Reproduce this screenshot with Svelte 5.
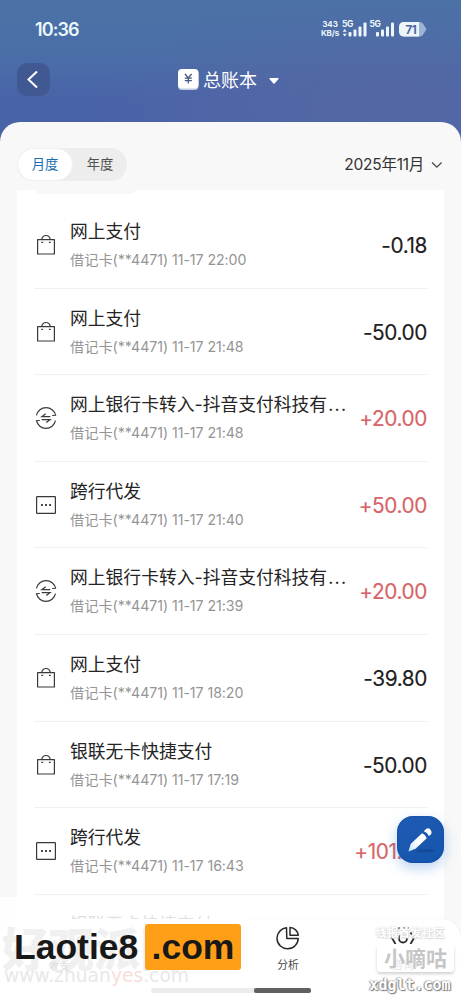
<script>
  const rows = [
    { icon: 'bag', title: '网上支付', time: '22:00', amount: '-0.18' },
    { icon: 'bag', title: '网上支付', time: '21:48', amount: '-50.00' },
    { icon: 'transfer', title: '网上银行卡转入-抖音支付科技有', cut: true, time: '21:48', amount: '+20.00' },
    { icon: 'more', title: '跨行代发', time: '21:40', amount: '+50.00' },
    { icon: 'transfer', title: '网上银行卡转入-抖音支付科技有', cut: true, time: '21:39', amount: '+20.00' },
    { icon: 'bag', title: '网上支付', time: '18:20', amount: '-39.80' },
    { icon: 'bag', title: '银联无卡快捷支付', time: '17:19', amount: '-50.00' },
    { icon: 'more', title: '跨行代发', time: '16:43', amount: '+101.00' },
    { icon: 'none', title: '银联无卡快捷支付', time: '', amount: '' }
  ];
</script>

<div class="screen">
  <header>
    <div class="status">
      <span class="clock">10:36</span>
      <div class="signals">
        <div class="speed"><span>343</span><span>KB/s</span></div>
        <svg class="bars" width="55" height="20" viewBox="0 0 55 20" fill="#eef6fc">
          <text x="0" y="8">5G</text>
          <text x="27.500" y="8">5G</text>
          <path d="M2.700 10l2 2.700H.7zM2.700 17.500l2-2.700H.7z" />
          <rect x="6.500" y="13" width="3" height="4.500" rx="1" /><rect x="11.500" y="10.500" width="3" height="7" rx="1" /><rect x="16.500" y="7.500" width="3" height="10" rx="1" /><rect x="21.500" y="3.500" width="3" height="14" rx="1" />
          <rect x="34" y="13" width="3" height="4.500" rx="1" /><rect x="39" y="10.500" width="3" height="7" rx="1" /><rect x="44" y="7.500" width="3" height="10" rx="1" /><rect x="49" y="3.500" width="3" height="14" rx="1" />
        </svg>
        <svg class="battery" width="28" height="15" viewBox="0 0 28 15">
          <path d="M4 0h17a4 4 0 0 1 3.500 2.500L27.500 7.300 24.500 12A4 4 0 0 1 21 14.500H4z" fill="#9eb4d4" />
          <path d="M4.500 0H20v14.500H4.500A4.500 4.500 0 0 1 0 10V4.500A4.500 4.500 0 0 1 4.500 0z" fill="#edf5fa" />
          <text x="6.500" y="11.500">71</text>
        </svg>
      </div>
    </div>
    <div class="topbar">
      <button class="back" aria-label="返回">
        <svg width="33" height="33" viewBox="0 0 33 33"><path d="M20 8.500 11.500 16.500 20 24.500" fill="none" stroke="#fff" stroke-width="2" /></svg>
      </button>
      <div class="book">
        <svg width="21" height="21" viewBox="0 0 21 21">
          <rect x="0" y="1" width="20.500" height="20" rx="4" fill="#bccbe5" /><rect width="20.500" height="19.500" rx="4" fill="#fff" />
          <path d="M7 5l3.300 4L13.600 5M10.300 9v5.500M6.800 9.200h7M6.800 11.600h7" fill="none" stroke="#455982" stroke-width="1.300" />
        </svg>
        <span>总账本</span>
        <svg class="caret" width="10" height="6" viewBox="0 0 10 6"><path d="M1 0h8q1 .3.500 1L5.600 5.500q-.6.500-1.200 0L.5 1Q0 .3 1 0z" fill="#fff" /></svg>
      </div>
    </div>
  </header>

  <main>
    <div class="filters">
      <div class="tabs"><span class="active">月度</span><span>年度</span></div>
      <div class="month"><span>2025年11月</span><svg width="12" height="8" viewBox="0 0 12 8"><path d="M1 1.500 5.800 6.200 10.600 1.500" fill="none" stroke="#444" stroke-width="1.200" /></svg></div>
    </div>
    <div class="list">
      <div class="ghost"></div>
      {#each rows as row}
        <div class="row">
          <svg class="icon" width="22" height="22" viewBox="0 0 22 22" fill="none" stroke="#393939" stroke-width="1.200">
            {#if row.icon === 'bag'}
              <path d="M2.600 5.600h16.800v14.400H2.600zM6.700 5.600c.4-2.700 1.700-4.100 4.300-4.100S14.900 2.900 15.300 5.600M6.300 8.400h1.800M13.900 8.400h1.800" stroke-linejoin="round" />
            {:else if row.icon === 'transfer'}
              <path d="M1.500 8.300A9.800 9.800 0 0 1 20.600 8.300L17.200 8.500M20.500 13.700A9.800 9.800 0 0 1 1.400 13.700L4.800 13.500" />
              <path d="M15.300 9.700H6.900L10.700 6.800M6.700 12.600h8.400L11.300 15.500" />
            {:else if row.icon === 'more'}
              <rect x="1.600" y="2.600" width="18.800" height="16.800" rx=".5" />
              <path d="M6 11h1.800M10.100 11h1.800M14.200 11H16" stroke-width="1.800" />
            {/if}
          </svg>
          <div class="detail">
            <div class="title">{row.title}{#if row.cut}<span class="dots">...</span>{/if}</div>
            {#if row.time}<div class="sub">借记卡<span>(**4471) 11-17 {row.time}</span></div>{/if}
          </div>
          <div class="amount" class:income={row.amount.startsWith('+')}>{row.amount}</div>
        </div>
      {/each}
    </div>
  </main>

  <footer>
    <nav>
      <div class="item"></div>
      <div class="item"></div>
      <div class="item">
        <svg width="24" height="24" viewBox="0 0 24 24" fill="none" stroke="#292929" stroke-width="1.500"><path d="M10.500 1.700A10.600 10.600 0 1 0 22.200 12.500H10.800zM14 1.500V9.300h8.300A8.700 8.700 0 0 0 14 1.500z" stroke-linejoin="round" /></svg>
        <span>分析</span>
      </div>
      <div class="item">
        <svg width="26" height="24" viewBox="0 0 26 24" fill="none" stroke="#292929" stroke-width="1.800"><path d="M5.500 6.500 2 12l3.500 6M20.500 6.500 24 12l-3.500 6M7 2.500h3M12 2.500h3M17 2.500h2" /><circle cx="13" cy="12.500" r="4" /></svg>
        <span>咨询</span>
      </div>
    </nav>
  </footer>

  <button class="edit" aria-label="编辑">
    <svg width="48" height="48" viewBox="0 0 48 48">
      <defs><linearGradient id="pen" x1="0" y1="1" x2="1" y2="0"><stop offset="0" stop-color="#c5e4ff" /><stop offset=".4" stop-color="#fff" /></linearGradient></defs>
      <path d="M18 36.500 23 33h12q4 2 0 3z" fill="#124187" opacity=".55" />
      <path d="M11.500 35.500 13.700 28 25 17.200q3 .9 4.800 5L18.500 32.700zM26.800 15.200 29 13q2.500-1.700 4.500.8t.7 4.500l-2.300 1.800q-1.500-3.700-5.100-4.900z" fill="url(#pen)" />
    </svg>
  </button>

  <div class="mark-left">
    <div class="faint-name">好观派网</div>
    <div class="faint-url">www.zhuan<span>yes</span>.com</div>
    <div class="faint-tab">收支</div>
    <div class="brand"><span>Laotie8</span><b>.com</b></div>
  </div>
  <div class="scrollbar"><i></i></div>
  <div class="mark-right">
    <div class="community">线报首发社区</div>
    <div class="name">小嘀咕</div>
    <div class="site">xdglt.com</div>
  </div>
</div>

<style>
  :global(body) { margin: 0; }
  .screen { position: relative; width: 461px; height: 1000px; overflow: hidden; display: flex; flex-direction: column; font-family: "Noto Sans CJK SC", sans-serif; color: #222;
    background: radial-gradient(ellipse 300px 110px at 390px 105px, #5568a5 0%, #5568a500 100%), linear-gradient(180deg, #4b72a6 0, #4a6ea8 55px, #4963a7 100px, #4963a7 140px); }
  button { border: 0; padding: 0; }
  svg { display: block; flex: none; }
  header { height: 122px; flex: none; box-sizing: border-box; padding-top: 17px; }
  .status { height: 26px; display: flex; align-items: center; justify-content: space-between; padding: 0 34px 0 35px; }
  .clock { font: 600 18px/26px "Inter", sans-serif; letter-spacing: -.9px; color: #eaf7fb; }
  .signals { display: flex; align-items: center; margin-top: -2px; }
  .speed { display: flex; flex-direction: column; align-items: center; width: 20px; margin-right: 2px; font: 700 8px/9.500px "Inter", sans-serif; color: #eef6fc; letter-spacing: -.1px; }
  .bars { margin-right: 2px; }
  .bars text { font: 700 8.500px "Inter", sans-serif; letter-spacing: -.4px; }
  .battery text { font: 700 11.500px "Inter", sans-serif; fill: #4969a0; letter-spacing: -.5px; }
  .topbar { display: grid; grid-template-columns: 33px 1fr 33px; padding: 0 17px; margin-top: 20px; align-items: center; }
  .back { width: 33px; height: 33px; border-radius: 10px; background: #405993; }
  .book { display: flex; align-items: center; justify-content: center; color: #fff; font-size: 18px; line-height: 26px; margin-left: -4px; }
  .book span { margin-left: 4px; margin-top: -2px; }
  .caret { margin-left: 12px; margin-top: 2px; }
  main { flex: 1; min-height: 0; background: #f8f8f8; border-radius: 20px 20px 0 0; display: flex; flex-direction: column; }
  .filters { flex: none; height: 68px; box-sizing: border-box; padding: 26px 18px 0 17px; display: flex; justify-content: space-between; align-items: flex-start; }
  .tabs { display: flex; width: 110px; height: 33px; border-radius: 17px; background: #ededed; font-size: 13.300px; line-height: 31px; text-align: center; color: #505050; }
  .tabs span { flex: 1; }
  .tabs .active { background: #fff; border-radius: 17px; color: #176fad; border: 1px solid #f0f0f0; box-sizing: border-box; line-height: 29px; }
  .month { display: flex; align-items: center; gap: 7px; height: 33px; font-size: 15.500px; color: #333; font-family: "Inter", "Noto Sans CJK SC", sans-serif; letter-spacing: -.25px; }
  .month span { margin-top: -3px; }
  .list { flex: 1; min-height: 0; overflow: hidden; margin: 0 17px; background: #fff; padding: 0 17px; }
  .ghost { width: 100px; height: 4px; margin-left: 1px; border-radius: 0 0 12px 12px; background: #f8f8f8; margin-bottom: 8px; }
  .row { height: 86.600px; box-sizing: border-box; border-bottom: 1px solid #f0f0f0; display: flex; align-items: flex-start; }
  .icon { margin: 32px 13px 0 1px; }
  .detail { flex: 1; min-width: 0; padding-top: 17px; }
  .title { font-family: "Inter", "Noto Sans CJK SC", sans-serif; font-size: 17.800px; line-height: 26px; height: 26px; white-space: nowrap; color: #242424; }
  .dots { letter-spacing: 1.300px; margin-left: 1px; }
  .sub { font-size: 14.200px; line-height: 22px; margin-top: 3px; color: #959595; white-space: nowrap; }
  .sub span { font-family: "Inter", sans-serif; letter-spacing: -.07px; }
  .amount { font: 400 20.800px/28px "Inter", sans-serif; letter-spacing: -.4px; padding-top: 30px; color: #202020; white-space: nowrap; -webkit-text-stroke: .15px; }
  .amount.income { color: #d76468; }
  footer { flex: none; height: 81px; background: #f9f9f9; }
  nav { height: 81px; background: #fff; border-radius: 20px 20px 0 0; box-shadow: 0 0 3px #0000000d; display: grid; grid-template-columns: repeat(4, 1fr); }
  .item { display: flex; flex-direction: column; align-items: center; padding-top: 7px; font-size: 10.800px; line-height: 16px; color: #484848; gap: 6px; }
  .edit { position: absolute; z-index: 3; left: 397px; top: 816px; width: 47px; height: 47px; border-radius: 16px; background: linear-gradient(150deg, #205bb4, #1555ac); box-shadow: 0 5px 13px #317bd555, inset 0 0 2px #0b4592; }
  .mark-left { position: absolute; z-index: 2; left: 0; top: 897px; width: 249px; height: 91px; background: #ffffffdd; }
  .faint-name { position: absolute; left: 2px; top: 16px; color: #f0f0f0; font-weight: 900; font-size: 46px; line-height: 66px; white-space: nowrap; }
  .faint-url { position: absolute; left: 4px; top: 69px; color: #e8e8e8; font: 18.700px/20px "DejaVu Sans", sans-serif; white-space: nowrap; }
  .faint-url span { color: #f8ded9; }
  .faint-tab { position: absolute; left: 49px; top: 62px; font-size: 10px; line-height: 14px; color: #ddd; }
  .brand { position: absolute; left: 14px; top: 27px; display: flex; font: 700 35.500px/46px "Liberation Sans", sans-serif; color: #181818; }
  .brand span { width: 131px; }
  .brand b { width: 96px; height: 46px; border-radius: 3px; background: #ff9f17; text-align: center; }
  .scrollbar { position: absolute; z-index: 3; left: 151px; top: 988px; width: 160px; height: 5px; border-radius: 3px; background: #ececec; }
  .scrollbar i { display: block; margin-left: 103px; width: 57px; height: 5px; border-radius: 2px; background: #606060; }
  .mark-right { position: absolute; z-index: 3; left: 366px; top: 924px; width: 88px; height: 70px; text-align: center; white-space: nowrap; }
  .community { font-size: 11.500px; line-height: 16px; font-weight: 700; color: #fff; text-shadow: 0 0 2px #ccc, 1px 1px 1px #ddd; }
  .name { margin: 4px 0 0 11px; height: 28px; line-height: 27px; border-radius: 4px; font-size: 21px; font-weight: 700; color: #c6c6c6; background: #ffffffd9; box-shadow: 0 2px 3px #aaa8; text-shadow: 0 0 2px #fff; }
  .site { font: 900 15px/20px "DejaVu Sans Mono", monospace; margin-top: 3px; color: #fff; text-shadow: 1px 1px 1px #777, -1px 0 1px #999, 0 0 2px #777; }
</style>
